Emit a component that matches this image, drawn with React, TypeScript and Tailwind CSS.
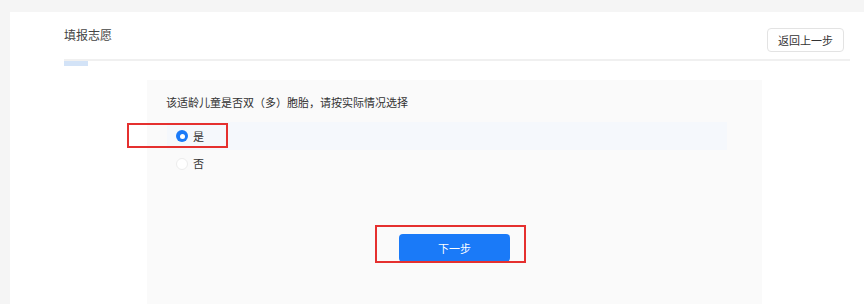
import React, { useState } from "react";

const font = { fontFamily: '"Noto Sans CJK SC", "Noto Sans", sans-serif' };

function Radio({ checked }: { checked: boolean }) {
  return checked ? (
    <span className="w-[12px] h-[12px] rounded-full bg-[#1a7af8] flex items-center justify-center">
      <span className="w-[5px] h-[5px] rounded-full bg-white" />
    </span>
  ) : (
    <span className="w-[12px] h-[12px] rounded-full border border-[#ececec] bg-white" />
  );
}

export default function App() {
  const [twin, setTwin] = useState("yes");

  const options = [
    { value: "yes", label: "是" },
    { value: "no", label: "否" },
  ];

  return (
    <div className="w-[864px] h-[304px] overflow-hidden bg-[#f5f5f5] pt-[12px] pl-[10px]" style={font}>
      <div className="bg-white h-full">
        {/* Header */}
        <div className="flex justify-between pl-[54px] pr-[20px] h-[47px]">
          <h1 className="pt-[14px] text-[12px] leading-[18px] text-[#444]">填报志愿</h1>
          <button className="mt-[16px] w-[77px] h-[24px] rounded-[4px] border border-[#e3e3e3] bg-white text-[11px] text-[#333]">
            返回上一步
          </button>
        </div>
        <div className="ml-[54px] mr-[14px] h-[2px] bg-[#f0f0f0]" />
        <div className="ml-[54px] w-[24px] h-[5px] bg-[#d3e3f7]" />

        {/* Question panel */}
        <div className="relative mt-[14px] ml-[137px] w-[615px] h-[300px] bg-[#fafafa] pt-[14px]">
          <p className="pl-[19px] text-[11px] leading-[16px] text-[#333]">
            该适龄儿童是否双（多）胞胎，请按实际情况选择
          </p>
          <div className="mt-[12px] ml-[20px] w-[560px]">
            {options.map((o, i) => (
              <label
                key={o.value}
                onClick={() => setTwin(o.value)}
                className={`flex items-center gap-[5px] pl-[9px] cursor-pointer ${
                  i === 0 ? "h-[28px] bg-[#f5f8fc]" : "h-[27px]"
                }`}
              >
                <Radio checked={twin === o.value} />
                <span className="text-[11px] text-[#333]">{o.label}</span>
              </label>
            ))}
          </div>
          {/* annotation box */}
          <div className="absolute left-[-20px] top-[43px] w-[101px] h-[25px] border-2 border-[#e5302f]" />

          <div className="flex justify-center mt-[57px]">
            <div className="relative">
              <button className="w-[111px] h-[28px] rounded-[4px] bg-[#1a7af8] text-white text-[11px]">
                下一步
              </button>
              <div className="absolute left-[-24px] top-[-9px] w-[151px] h-[38px] border-2 border-[#e5302f]" />
            </div>
          </div>
        </div>
      </div>
    </div>
  );
}
